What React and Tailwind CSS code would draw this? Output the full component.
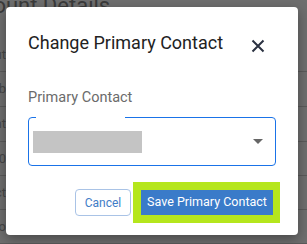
import React from "react";

const rows = [
  { t: "About", h: "h-[34px]" },
  { t: "Sub", h: "h-[35px]" },
  { t: "Amount", h: "h-[35px]" },
  { t: "1000", h: "h-[34px]" },
  { t: "Contact", h: "h-[34px]" },
  { t: "Info", h: "h-[34px]" },
];

export default function App() {
  return (
    <div
      className="relative w-[307px] h-[244px] overflow-hidden bg-[#6e6e6e]"
      style={{ fontFamily: "Roboto, 'Liberation Sans', sans-serif" }}
    >
      {/* dimmed page behind */}
      <div className="flex flex-col">
        <div className="h-[38px] flex flex-col">
          <div className="ml-[-44px] mt-[-7px] text-[22px] leading-[26px] text-[#3a3a3a] whitespace-nowrap">
            Account Details
          </div>
        </div>
        {rows.map((r, i) => (
          <div
            key={i}
            className={`${r.h} border-b border-[#5a5a5a] flex items-center`}
          >
            <div className="w-[6px] flex justify-end text-[13px] text-[#474747] whitespace-nowrap">
              {r.t}
            </div>
          </div>
        ))}
      </div>

      {/* modal */}
      <div className="absolute left-[6px] top-[7px] w-[292px] h-[228px] bg-white rounded-[4px] shadow-[0_4px_12px_rgba(0,0,0,0.35)] flex flex-col px-[22px] pt-[24px]">
        <div className="flex items-start justify-between">
          <div className="text-[18px] leading-[24px] text-[#222222]">
            Change Primary Contact
          </div>
          <svg
            className="mt-[3px] mr-[6px]"
            width="24"
            height="24"
            viewBox="0 0 24 24"
            fill="none"
            stroke="#2b3242"
            strokeWidth="2"
          >
            <path d="M6.5 6.5 L17.5 17.5 M17.5 6.5 L6.5 17.5" />
          </svg>
        </div>

        <div className="mt-[30px] text-[14.5px] leading-[20px] text-[#6b6b6b]">
          Primary Contact
        </div>

        <div className="relative mt-[9px] h-[49px] border-[1.5px] border-[#1a73e8] rounded-[4px] flex items-center pl-[3.5px] pr-[12px]">
          <span className="absolute left-[7px] top-[-2px] w-[89px] h-[3px] bg-white" />
          <div className="w-[109px] h-[22px] bg-[#c4c4c4]" />
          <div className="flex-1" />
          <svg width="10" height="5" viewBox="0 0 10 5">
            <path d="M0 0 L10 0 L5 5 Z" fill="#666666" />
          </svg>
        </div>

        <div className="mt-[16px] mr-[-4px] flex items-center justify-end gap-[2px]">
          <div className="w-[56px] h-[27px] border border-[#a9c3e6] rounded-[4px] flex items-center justify-center text-[12px] text-[#3f7dc7]">
            Cancel
          </div>
          <div className="bg-[#b5e61d] pl-[8px] pr-[7px] py-[8px]">
            <div className="w-[132px] h-[25px] bg-[#3a7bc9] flex items-center justify-center text-[12.5px] text-white">
              Save Primary Contact
            </div>
          </div>
        </div>
      </div>
    </div>
  );
}
